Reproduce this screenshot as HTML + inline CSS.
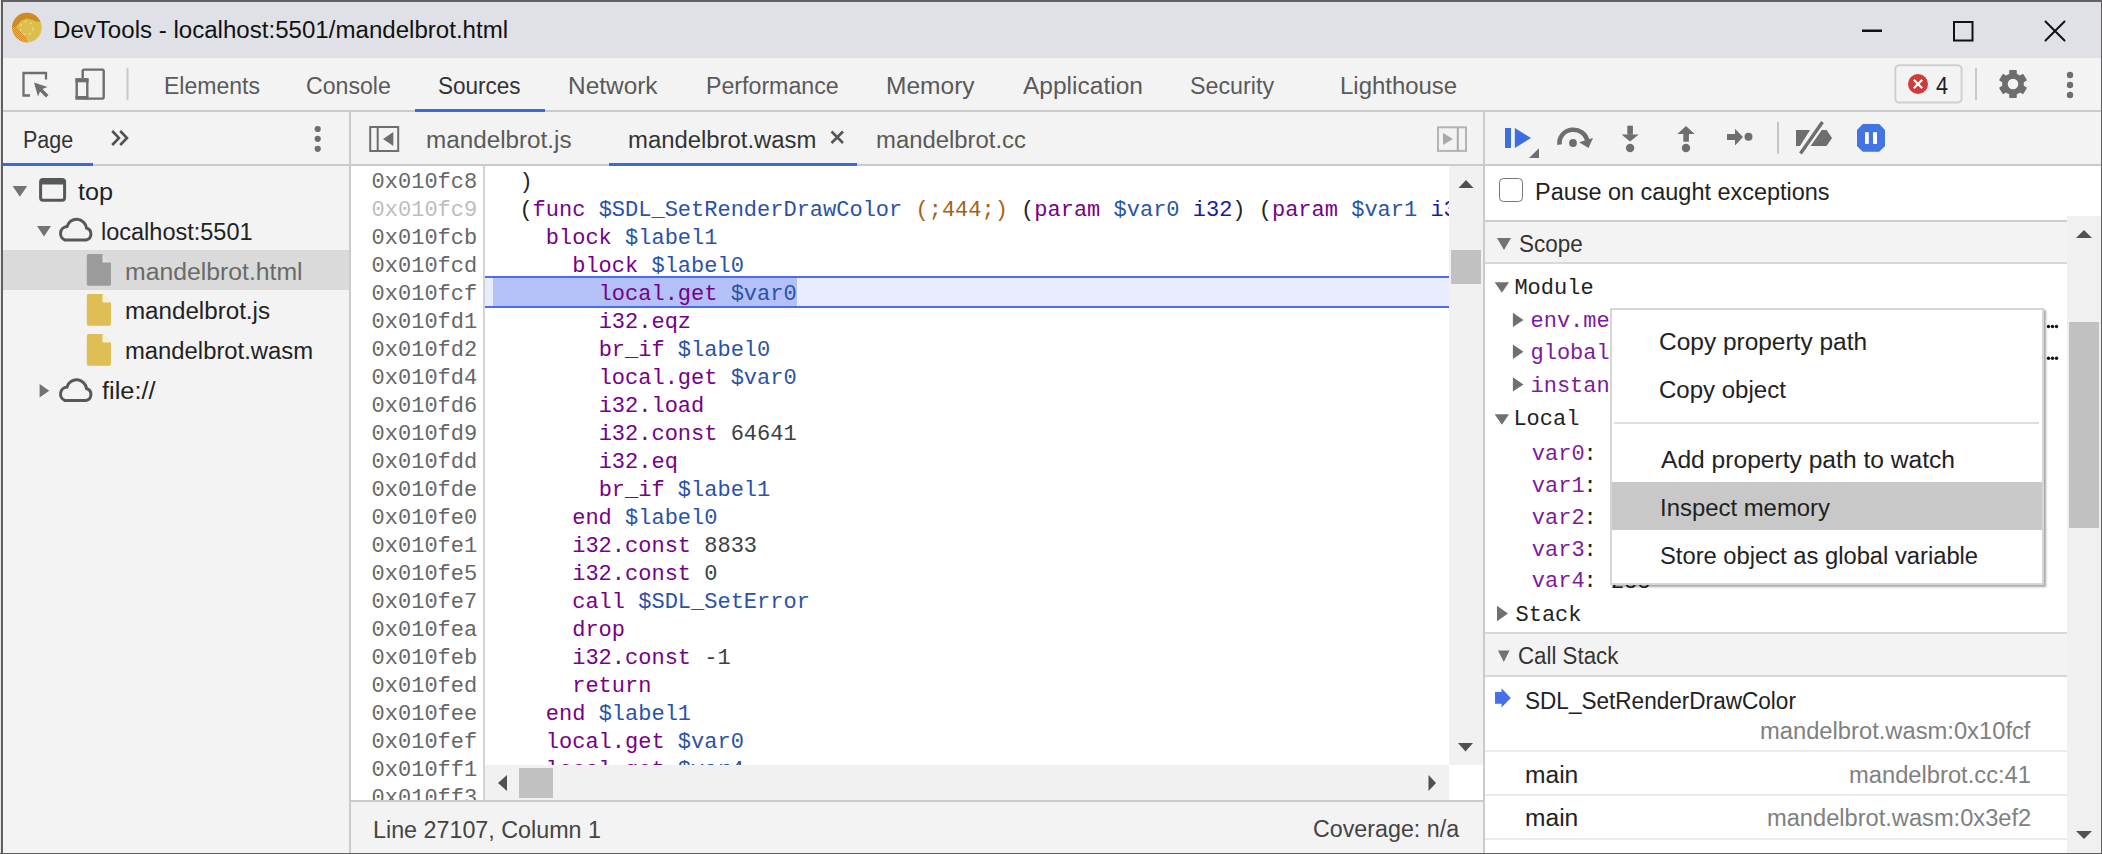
<!DOCTYPE html>
<html><head><meta charset="utf-8">
<style>
html,body{margin:0;padding:0;}
body{width:2102px;height:854px;position:relative;overflow:hidden;background:#5c5c5c;font-family:"Liberation Sans",sans-serif;}
.r{position:absolute;}
.t{position:absolute;white-space:pre;transform-origin:0 0;}
.c{position:absolute;left:493px;white-space:pre;font-family:"Liberation Mono",monospace;font-size:22px;line-height:22px;}
.g{position:absolute;left:371.6px;white-space:pre;font-family:"Liberation Mono",monospace;font-size:22px;line-height:22px;}
svg{position:absolute;overflow:visible;}
</style></head><body>
<!-- title bar -->
<div class="r" style="left:2px;top:2px;width:2099px;height:56px;background:#dfe1e6"></div>
<!-- main toolbar -->
<div class="r" style="left:2px;top:58px;width:2099px;height:52px;background:#f3f3f3"></div>
<div class="r" style="left:2px;top:110px;width:2099px;height:2px;background:#cbcbcb"></div>
<div class="r" style="left:415px;top:109px;width:130px;height:3px;background:#3a6ae0"></div>
<!-- navigator -->
<div class="r" style="left:2px;top:112px;width:347px;height:741px;background:#f3f3f3"></div>
<div class="r" style="left:2px;top:164px;width:347px;height:2px;background:#cbcbcb"></div>
<div class="r" style="left:2px;top:163px;width:91px;height:3px;background:#3a6ae0"></div>
<div class="r" style="left:2px;top:250px;width:347px;height:40px;background:#dadada"></div>
<div class="r" style="left:349px;top:112px;width:2px;height:741px;background:#cbcbcb"></div>
<!-- editor -->
<div class="r" style="left:351px;top:112px;width:1132px;height:52px;background:#f3f3f3"></div>
<div class="r" style="left:351px;top:164px;width:1132px;height:2px;background:#cbcbcb"></div>
<div class="r" style="left:609px;top:163px;width:248px;height:3px;background:#3a6ae0"></div>
<div class="r" style="left:351px;top:166px;width:1132px;height:634px;background:#fff"></div>
<div class="r" style="left:483px;top:166px;width:2px;height:634px;background:#d3d3d3"></div>
<!-- highlighted line -->
<div class="r" style="left:485px;top:276px;width:964px;height:32px;background:#4a6cf0"></div>
<div class="r" style="left:485px;top:278px;width:964px;height:28px;background:#e9ecfd"></div>
<div class="r" style="left:493px;top:278px;width:304px;height:28px;background:#b3c1f8"></div>
<div class="g" style="top:171.95px;color:#666666">0x010fc8</div>
<div class="g" style="top:199.95px;color:#bdbdbd">0x010fc9</div>
<div class="g" style="top:227.95px;color:#666666">0x010fcb</div>
<div class="g" style="top:255.95px;color:#666666">0x010fcd</div>
<div class="g" style="top:283.95px;color:#666666">0x010fcf</div>
<div class="g" style="top:311.95px;color:#666666">0x010fd1</div>
<div class="g" style="top:339.95px;color:#666666">0x010fd2</div>
<div class="g" style="top:367.95px;color:#666666">0x010fd4</div>
<div class="g" style="top:395.95px;color:#666666">0x010fd6</div>
<div class="g" style="top:423.95px;color:#666666">0x010fd9</div>
<div class="g" style="top:451.95px;color:#666666">0x010fdd</div>
<div class="g" style="top:479.95px;color:#666666">0x010fde</div>
<div class="g" style="top:507.95px;color:#666666">0x010fe0</div>
<div class="g" style="top:535.95px;color:#666666">0x010fe1</div>
<div class="g" style="top:563.95px;color:#666666">0x010fe5</div>
<div class="g" style="top:591.95px;color:#666666">0x010fe7</div>
<div class="g" style="top:619.95px;color:#666666">0x010fea</div>
<div class="g" style="top:647.95px;color:#666666">0x010feb</div>
<div class="g" style="top:675.95px;color:#666666">0x010fed</div>
<div class="g" style="top:703.95px;color:#666666">0x010fee</div>
<div class="g" style="top:731.95px;color:#666666">0x010fef</div>
<div class="g" style="top:759.95px;color:#666666">0x010ff1</div>
<div class="g" style="top:787.95px;color:#666666">0x010ff3</div>
<div class="c" style="top:171.95px"><span style="color:#222">  )</span></div>
<div class="c" style="top:199.95px"><span style="color:#222">  (</span><span style="color:#770088">func</span><span style="color:#222"> </span><span style="color:#2a52a8">$SDL_SetRenderDrawColor</span><span style="color:#222"> </span><span style="color:#a85f12">(;444;)</span><span style="color:#222"> (</span><span style="color:#770088">param</span><span style="color:#222"> </span><span style="color:#2a52a8">$var0</span><span style="color:#222"> </span><span style="color:#1a1a9c">i32</span><span style="color:#222">) (</span><span style="color:#770088">param</span><span style="color:#222"> </span><span style="color:#2a52a8">$var1</span><span style="color:#222"> </span><span style="color:#1a1a9c">i32</span><span style="color:#222">) (</span><span style="color:#770088">param</span></div>
<div class="c" style="top:227.95px"><span style="color:#222">    </span><span style="color:#770088">block</span><span style="color:#222"> </span><span style="color:#2a52a8">$label1</span></div>
<div class="c" style="top:255.95px"><span style="color:#222">      </span><span style="color:#770088">block</span><span style="color:#222"> </span><span style="color:#2a52a8">$label0</span></div>
<div class="c" style="top:283.95px"><span style="color:#222">        </span><span style="color:#770088">local.get</span><span style="color:#222"> </span><span style="color:#2a52a8">$var0</span></div>
<div class="c" style="top:311.95px"><span style="color:#222">        </span><span style="color:#770088">i32.eqz</span></div>
<div class="c" style="top:339.95px"><span style="color:#222">        </span><span style="color:#770088">br_if</span><span style="color:#222"> </span><span style="color:#2a52a8">$label0</span></div>
<div class="c" style="top:367.95px"><span style="color:#222">        </span><span style="color:#770088">local.get</span><span style="color:#222"> </span><span style="color:#2a52a8">$var0</span></div>
<div class="c" style="top:395.95px"><span style="color:#222">        </span><span style="color:#770088">i32.load</span></div>
<div class="c" style="top:423.95px"><span style="color:#222">        </span><span style="color:#770088">i32.const</span><span style="color:#222"> </span><span style="color:#3a423f">64641</span></div>
<div class="c" style="top:451.95px"><span style="color:#222">        </span><span style="color:#770088">i32.eq</span></div>
<div class="c" style="top:479.95px"><span style="color:#222">        </span><span style="color:#770088">br_if</span><span style="color:#222"> </span><span style="color:#2a52a8">$label1</span></div>
<div class="c" style="top:507.95px"><span style="color:#222">      </span><span style="color:#770088">end</span><span style="color:#222"> </span><span style="color:#2a52a8">$label0</span></div>
<div class="c" style="top:535.95px"><span style="color:#222">      </span><span style="color:#770088">i32.const</span><span style="color:#222"> </span><span style="color:#3a423f">8833</span></div>
<div class="c" style="top:563.95px"><span style="color:#222">      </span><span style="color:#770088">i32.const</span><span style="color:#222"> </span><span style="color:#3a423f">0</span></div>
<div class="c" style="top:591.95px"><span style="color:#222">      </span><span style="color:#770088">call</span><span style="color:#222"> </span><span style="color:#2a52a8">$SDL_SetError</span></div>
<div class="c" style="top:619.95px"><span style="color:#222">      </span><span style="color:#770088">drop</span></div>
<div class="c" style="top:647.95px"><span style="color:#222">      </span><span style="color:#770088">i32.const</span><span style="color:#222"> </span><span style="color:#3a423f">-1</span></div>
<div class="c" style="top:675.95px"><span style="color:#222">      </span><span style="color:#770088">return</span></div>
<div class="c" style="top:703.95px"><span style="color:#222">    </span><span style="color:#770088">end</span><span style="color:#222"> </span><span style="color:#2a52a8">$label1</span></div>
<div class="c" style="top:731.95px"><span style="color:#222">    </span><span style="color:#770088">local.get</span><span style="color:#222"> </span><span style="color:#2a52a8">$var0</span></div>
<div class="c" style="top:759.95px"><span style="color:#222">    </span><span style="color:#770088">local.get</span><span style="color:#222"> </span><span style="color:#2a52a8">$var4</span></div>
<!-- editor scrollbars -->
<div class="r" style="left:1449px;top:166px;width:34px;height:599px;background:#f1f1f1"></div>
<div class="r" style="left:1451px;top:250px;width:30px;height:34px;background:#c1c1c1"></div>
<div class="r" style="left:485px;top:765px;width:964px;height:35px;background:#f1f1f1"></div>
<div class="r" style="left:519px;top:768px;width:34px;height:30px;background:#c1c1c1"></div>
<div class="r" style="left:1449px;top:765px;width:34px;height:35px;background:#fff"></div>
<svg style="left:0;top:0" width="2102" height="854">
  <polygon points="1458.5,188 1473.5,188 1466,180" fill="#4c524c"/>
  <polygon points="1458,743 1473,743 1465.5,751.5" fill="#4c524c"/>
  <polygon points="507,775 507,791 498,783" fill="#4c524c"/>
  <polygon points="1428.5,775 1428.5,791 1436,783" fill="#4c524c"/>
</svg>
<!-- status bar -->
<div class="r" style="left:351px;top:800px;width:1132px;height:2px;background:#cbcbcb"></div>
<div class="r" style="left:351px;top:802px;width:1132px;height:51px;background:#f3f3f3"></div>
<div class="r" style="left:1483px;top:112px;width:2px;height:741px;background:#cbcbcb"></div>
<!-- sidebar -->
<div class="r" style="left:1485px;top:112px;width:616px;height:52px;background:#f3f3f3"></div>
<div class="r" style="left:1485px;top:164px;width:616px;height:2px;background:#cbcbcb"></div>
<div class="r" style="left:1485px;top:166px;width:616px;height:687px;background:#fff"></div>
<div class="r" style="left:1485px;top:220px;width:582px;height:2px;background:#cdcdcd"></div>
<div class="r" style="left:1485px;top:222px;width:582px;height:40px;background:#f3f3f3"></div>
<div class="r" style="left:1485px;top:262px;width:582px;height:2px;background:#d8d8d8"></div>
<div class="r" style="left:1485px;top:632px;width:582px;height:2px;background:#d8d8d8"></div>
<div class="r" style="left:1485px;top:634px;width:582px;height:41px;background:#f3f3f3"></div>
<div class="r" style="left:1485px;top:675px;width:582px;height:2px;background:#d8d8d8"></div>
<div class="r" style="left:1485px;top:750px;width:582px;height:2px;background:#ebebeb"></div>
<div class="r" style="left:1485px;top:794px;width:582px;height:2px;background:#ebebeb"></div>
<div class="r" style="left:1485px;top:838px;width:582px;height:2px;background:#ebebeb"></div>
<div class="r" style="left:2067px;top:216px;width:34px;height:637px;background:#f0f0f0"></div>
<div class="r" style="left:2069px;top:322px;width:30px;height:206px;background:#c1c1c1"></div>
<svg style="left:0;top:0" width="2102" height="854">
  <polygon points="2076,238 2092,238 2084,230" fill="#4c524c"/>
  <polygon points="2076,831 2092,831 2084,839" fill="#4c524c"/>
</svg>
<!-- checkbox -->
<div class="r" style="left:1499px;top:178px;width:22px;height:22px;border:1.6px solid #767676;border-radius:4.5px;background:#fff"></div>
<div class="t" style="left:53.38px;top:18.80px;font-family:&quot;Liberation Sans&quot;, sans-serif;font-size:23.5px;line-height:23.5px;color:#111;transform:scaleX(1.0247);">DevTools - localhost:5501/mandelbrot.html</div>
<div class="t" style="left:164.22px;top:75.30px;font-family:&quot;Liberation Sans&quot;, sans-serif;font-size:23.5px;line-height:23.5px;color:#5a5a5a;transform:scaleX(0.9791);">Elements</div>
<div class="t" style="left:306.02px;top:75.30px;font-family:&quot;Liberation Sans&quot;, sans-serif;font-size:23.5px;line-height:23.5px;color:#5a5a5a;transform:scaleX(0.9830);">Console</div>
<div class="t" style="left:438.24px;top:75.30px;font-family:&quot;Liberation Sans&quot;, sans-serif;font-size:23.5px;line-height:23.5px;color:#333;transform:scaleX(0.9579);">Sources</div>
<div class="t" style="left:568.26px;top:75.30px;font-family:&quot;Liberation Sans&quot;, sans-serif;font-size:23.5px;line-height:23.5px;color:#5a5a5a;transform:scaleX(1.0394);">Network</div>
<div class="t" style="left:706.41px;top:75.30px;font-family:&quot;Liberation Sans&quot;, sans-serif;font-size:23.5px;line-height:23.5px;color:#5a5a5a;transform:scaleX(0.9861);">Performance</div>
<div class="t" style="left:886.16px;top:75.30px;font-family:&quot;Liberation Sans&quot;, sans-serif;font-size:23.5px;line-height:23.5px;color:#5a5a5a;transform:scaleX(1.0438);">Memory</div>
<div class="t" style="left:1022.80px;top:75.30px;font-family:&quot;Liberation Sans&quot;, sans-serif;font-size:23.5px;line-height:23.5px;color:#5a5a5a;transform:scaleX(1.0431);">Application</div>
<div class="t" style="left:1189.71px;top:75.30px;font-family:&quot;Liberation Sans&quot;, sans-serif;font-size:23.5px;line-height:23.5px;color:#5a5a5a;transform:scaleX(0.9900);">Security</div>
<div class="t" style="left:1339.68px;top:75.30px;font-family:&quot;Liberation Sans&quot;, sans-serif;font-size:23.5px;line-height:23.5px;color:#5a5a5a;transform:scaleX(1.0183);">Lighthouse</div>
<div class="t" style="left:1936.00px;top:75.00px;font-family:&quot;Liberation Sans&quot;, sans-serif;font-size:23.5px;line-height:23.5px;color:#222;transform:scaleX(0.9231);">4</div>
<div class="t" style="left:22.68px;top:129.10px;font-family:&quot;Liberation Sans&quot;, sans-serif;font-size:23.5px;line-height:23.5px;color:#333;transform:scaleX(0.9161);">Page</div>
<div class="t" style="left:425.67px;top:129.20px;font-family:&quot;Liberation Sans&quot;, sans-serif;font-size:23.5px;line-height:23.5px;color:#5a5a5a;transform:scaleX(1.0322);">mandelbrot.js</div>
<div class="t" style="left:628.18px;top:129.20px;font-family:&quot;Liberation Sans&quot;, sans-serif;font-size:23.5px;line-height:23.5px;color:#333;transform:scaleX(1.0158);">mandelbrot.wasm</div>
<div class="t" style="left:876.18px;top:129.20px;font-family:&quot;Liberation Sans&quot;, sans-serif;font-size:23.5px;line-height:23.5px;color:#5a5a5a;transform:scaleX(1.0160);">mandelbrot.cc</div>
<div class="t" style="left:77.50px;top:180.80px;font-family:&quot;Liberation Sans&quot;, sans-serif;font-size:23.5px;line-height:23.5px;color:#222;transform:scaleX(1.0737);">top</div>
<div class="t" style="left:101.00px;top:220.80px;font-family:&quot;Liberation Sans&quot;, sans-serif;font-size:23.5px;line-height:23.5px;color:#222;">localhost:5501</div>
<div class="t" style="left:125.35px;top:260.50px;font-family:&quot;Liberation Sans&quot;, sans-serif;font-size:23.5px;line-height:23.5px;color:#6a6a6a;transform:scaleX(1.0537);">mandelbrot.html</div>
<div class="t" style="left:125.37px;top:300.30px;font-family:&quot;Liberation Sans&quot;, sans-serif;font-size:23.5px;line-height:23.5px;color:#222;transform:scaleX(1.0279);">mandelbrot.js</div>
<div class="t" style="left:125.39px;top:340.30px;font-family:&quot;Liberation Sans&quot;, sans-serif;font-size:23.5px;line-height:23.5px;color:#222;transform:scaleX(1.0137);">mandelbrot.wasm</div>
<div class="t" style="left:102.00px;top:380.40px;font-family:&quot;Liberation Sans&quot;, sans-serif;font-size:23.5px;line-height:23.5px;color:#222;transform:scaleX(1.0779);">file://</div>
<div class="t" style="left:1534.70px;top:181.10px;font-family:&quot;Liberation Sans&quot;, sans-serif;font-size:23.5px;line-height:23.5px;color:#222;transform:scaleX(0.9976);">Pause on caught exceptions</div>
<div class="t" style="left:1519.05px;top:232.90px;font-family:&quot;Liberation Sans&quot;, sans-serif;font-size:23.5px;line-height:23.5px;color:#333;transform:scaleX(0.9548);">Scope</div>
<div class="t" style="left:1514.40px;top:277.95px;font-family:&quot;Liberation Mono&quot;, monospace;font-size:22px;line-height:22px;color:#222;">Module</div>
<div class="t" style="left:1530.50px;top:311.35px;font-family:&quot;Liberation Mono&quot;, monospace;font-size:22px;line-height:22px;color:#7d1a9c;">env.me</div>
<div class="t" style="left:1530.50px;top:343.45px;font-family:&quot;Liberation Mono&quot;, monospace;font-size:22px;line-height:22px;color:#7d1a9c;">global</div>
<div class="t" style="left:1530.50px;top:376.25px;font-family:&quot;Liberation Mono&quot;, monospace;font-size:22px;line-height:22px;color:#7d1a9c;">instan</div>
<div class="t" style="left:1513.40px;top:409.15px;font-family:&quot;Liberation Mono&quot;, monospace;font-size:22px;line-height:22px;color:#222;">Local</div>
<div class="t" style="left:1531.80px;top:444.15px;font-family:&quot;Liberation Mono&quot;, monospace;font-size:22px;line-height:22px;color:#7d1a9c;">var0</div>
<div class="t" style="left:1583.50px;top:444.15px;font-family:&quot;Liberation Mono&quot;, monospace;font-size:22px;line-height:22px;color:#222;">:</div>
<div class="t" style="left:1531.80px;top:476.05px;font-family:&quot;Liberation Mono&quot;, monospace;font-size:22px;line-height:22px;color:#7d1a9c;">var1</div>
<div class="t" style="left:1583.50px;top:476.05px;font-family:&quot;Liberation Mono&quot;, monospace;font-size:22px;line-height:22px;color:#222;">:</div>
<div class="t" style="left:1531.80px;top:508.25px;font-family:&quot;Liberation Mono&quot;, monospace;font-size:22px;line-height:22px;color:#7d1a9c;">var2</div>
<div class="t" style="left:1583.50px;top:508.25px;font-family:&quot;Liberation Mono&quot;, monospace;font-size:22px;line-height:22px;color:#222;">:</div>
<div class="t" style="left:1531.80px;top:539.65px;font-family:&quot;Liberation Mono&quot;, monospace;font-size:22px;line-height:22px;color:#7d1a9c;">var3</div>
<div class="t" style="left:1583.50px;top:539.65px;font-family:&quot;Liberation Mono&quot;, monospace;font-size:22px;line-height:22px;color:#222;">:</div>
<div class="t" style="left:1531.80px;top:571.35px;font-family:&quot;Liberation Mono&quot;, monospace;font-size:22px;line-height:22px;color:#7d1a9c;">var4</div>
<div class="t" style="left:1583.50px;top:571.35px;font-family:&quot;Liberation Mono&quot;, monospace;font-size:22px;line-height:22px;color:#222;">:</div>
<div class="t" style="left:1611.00px;top:572.35px;font-family:&quot;Liberation Mono&quot;, monospace;font-size:22px;line-height:22px;color:#222;">255</div>
<div class="t" style="left:1515.50px;top:605.35px;font-family:&quot;Liberation Mono&quot;, monospace;font-size:22px;line-height:22px;color:#222;">Stack</div>
<div class="t" style="left:1518.35px;top:645.10px;font-family:&quot;Liberation Sans&quot;, sans-serif;font-size:23.5px;line-height:23.5px;color:#333;transform:scaleX(0.9492);">Call Stack</div>
<div class="t" style="left:1524.94px;top:690.40px;font-family:&quot;Liberation Sans&quot;, sans-serif;font-size:23.5px;line-height:23.5px;color:#222;transform:scaleX(0.9602);">SDL_SetRenderDrawColor</div>
<div class="t" style="left:1759.99px;top:720.00px;font-family:&quot;Liberation Sans&quot;, sans-serif;font-size:23.5px;line-height:23.5px;color:#808080;transform:scaleX(1.0100);">mandelbrot.wasm:0x10fcf</div>
<div class="t" style="left:1524.85px;top:763.50px;font-family:&quot;Liberation Sans&quot;, sans-serif;font-size:23.5px;line-height:23.5px;color:#222;transform:scaleX(1.0457);">main</div>
<div class="t" style="left:1848.79px;top:763.50px;font-family:&quot;Liberation Sans&quot;, sans-serif;font-size:23.5px;line-height:23.5px;color:#808080;transform:scaleX(1.0096);">mandelbrot.cc:41</div>
<div class="t" style="left:1524.85px;top:807.00px;font-family:&quot;Liberation Sans&quot;, sans-serif;font-size:23.5px;line-height:23.5px;color:#222;transform:scaleX(1.0457);">main</div>
<div class="t" style="left:1766.59px;top:807.00px;font-family:&quot;Liberation Sans&quot;, sans-serif;font-size:23.5px;line-height:23.5px;color:#808080;transform:scaleX(1.0062);">mandelbrot.wasm:0x3ef2</div>
<div class="t" style="left:373.01px;top:818.60px;font-family:&quot;Liberation Sans&quot;, sans-serif;font-size:23.5px;line-height:23.5px;color:#444;transform:scaleX(0.9914);">Line 27107, Column 1</div>
<div class="t" style="left:1313.41px;top:818.40px;font-family:&quot;Liberation Sans&quot;, sans-serif;font-size:23.5px;line-height:23.5px;color:#444;transform:scaleX(0.9895);">Coverage: n/a</div>
<!-- ICONS -->
<svg style="left:0;top:0" width="2102" height="854">
  <defs>
    <radialGradient id="gold" cx="0.45" cy="0.55" r="0.6">
      <stop offset="0" stop-color="#ecd070"/>
      <stop offset="0.6" stop-color="#dcb43a"/>
      <stop offset="1" stop-color="#c89020"/>
    </radialGradient>
  <clipPath id="coin"><circle cx="26.9" cy="27.6" r="14.8"/></clipPath>
    <pattern id="dith" width="2" height="2" patternUnits="userSpaceOnUse"><rect width="1" height="1" fill="#cf8a22"/><rect x="1" y="1" width="1" height="1" fill="#cf8a22"/></pattern>
  </defs>
  <!-- app icon -->
  <circle cx="26.9" cy="27.6" r="14.8" fill="#dcbe4c"/>
  <g clip-path="url(#coin)">
    <polygon points="10,10 44,10 44,21.5 36,21.5 33,20 26.5,18.5 21,21 16,26.5 12,28" fill="#cf8a22"/>
    <polygon points="12,28 16,26.5 19,29 22,34 26,36 28,44 10,44" fill="url(#dith)"/>
  </g>
  <circle cx="26.6" cy="28.2" r="6.5" fill="none" stroke="#f3dc9a" stroke-width="1.1" stroke-dasharray="2.5 3"/>
  <!-- window controls -->
  <rect x="1862" y="29.5" width="20" height="2.5" fill="#111"/>
  <rect x="1954" y="22" width="18.5" height="18.5" fill="none" stroke="#111" stroke-width="2"/>
  <path d="M2045.5,21.5 L2064.5,40.5 M2064.5,21.5 L2045.5,40.5" stroke="#111" stroke-width="2" stroke-linecap="round"/>
  <!-- inspect icon -->
  <path d="M30,95.5 H23.5 V73 H46 V79.5" fill="none" stroke="#6e6e6e" stroke-width="2.3"/>
  <polygon points="34,82.5 47.5,87 42.5,89 48.5,95 46,97.5 40,91.5 38,96.5" fill="#6e6e6e"/>
  <!-- device icon -->
  <rect x="82.7" y="69.6" width="21" height="29" rx="1.5" fill="none" stroke="#6e6e6e" stroke-width="2.4"/>
  <rect x="75.5" y="78.3" width="13" height="21.2" rx="1.2" fill="#f3f3f3"/>
  <rect x="76.7" y="79.5" width="10.6" height="18.8" fill="none" stroke="#6e6e6e" stroke-width="2.4"/>
  <rect x="75.5" y="78.3" width="13" height="4" fill="#6e6e6e"/>
  <rect x="75.5" y="96" width="13" height="3.5" fill="#6e6e6e"/>
  <rect x="126.5" y="68" width="2" height="32" fill="#c8c8c8"/>
  <!-- error badge -->
  <rect x="1895.3" y="65.3" width="66.3" height="37.3" rx="4" fill="none" stroke="#cfcfcf" stroke-width="2"/>
  <circle cx="1918" cy="84" r="10" fill="#cf3a3a"/>
  <path d="M1913.8,79.8 L1922.2,88.2 M1922.2,79.8 L1913.8,88.2" stroke="#fff" stroke-width="2.2"/>
  <rect x="1975" y="68" width="2" height="32" fill="#c8c8c8"/>
  <!-- gear -->
  <g transform="translate(2013,84)" fill="#6e6e6e">
    <circle r="10.8"/>
    <rect x="-3.8" y="-14" width="7.6" height="28" rx="0.8"/>
    <rect x="-3.8" y="-14" width="7.6" height="28" rx="0.8" transform="rotate(60)"/>
    <rect x="-3.8" y="-14" width="7.6" height="28" rx="0.8" transform="rotate(120)"/>
    <circle r="5.3" fill="#f3f3f3"/>
  </g>
  <!-- kebab main -->
  <circle cx="2070" cy="75" r="3.2" fill="#6e6e6e"/>
  <circle cx="2070" cy="85" r="3.2" fill="#6e6e6e"/>
  <circle cx="2070" cy="95" r="3.2" fill="#6e6e6e"/>
  <!-- navigator header -->
  <path d="M112.2,131 L119,138 L112.2,145 M120.2,131 L127,138 L120.2,145" fill="none" stroke="#505050" stroke-width="2.6"/>
  <circle cx="317.7" cy="129" r="3.1" fill="#6e6e6e"/>
  <circle cx="317.7" cy="138.8" r="3.1" fill="#6e6e6e"/>
  <circle cx="317.7" cy="148.8" r="3.1" fill="#6e6e6e"/>
  <!-- editor nav toggle -->
  <rect x="370.2" y="127" width="28" height="24" fill="none" stroke="#6e6e6e" stroke-width="2"/>
  <rect x="376.7" y="127" width="2" height="24" fill="#6e6e6e"/>
  <polygon points="393.3,132 393.3,146 383,139" fill="#6e6e6e"/>
  <!-- close x on tab -->
  <path d="M831.5,131.5 L843,143 M843,131.5 L831.5,143" stroke="#555" stroke-width="2.6"/>
  <!-- sidebar toggle -->
  <rect x="1438" y="127.3" width="28" height="23.6" fill="none" stroke="#b4b4b4" stroke-width="2"/>
  <rect x="1456.8" y="127.3" width="2" height="23.6" fill="#aaa"/>
  <polygon points="1443,133 1443,145 1453,139" fill="#aaa"/>
  <!-- debugger toolbar -->
  <rect x="1505" y="128" width="6" height="20" fill="#3c6ee0"/>
  <polygon points="1514.8,128 1514.8,148 1531,138" fill="#3c6ee0"/>
  <polygon points="1529,158 1539,158 1539,148.3" fill="#6e6e6e"/>
  <!-- step over -->
  <path d="M1559.6,144.6 A13.8,13 0 0 1 1587.2,141" fill="none" stroke="#6e6e6e" stroke-width="4.6"/>
  <polygon points="1579.1,142.3 1593,138 1588.5,147.9" fill="#6e6e6e"/>
  <circle cx="1573" cy="143" r="3.9" fill="#6e6e6e"/>
  <!-- step into -->
  <rect x="1627.3" y="125.7" width="5.6" height="9" fill="#6e6e6e"/>
  <polygon points="1621.5,134.5 1638.7,134.5 1630.1,141.5" fill="#6e6e6e"/>
  <circle cx="1630.1" cy="148" r="4.2" fill="#6e6e6e"/>
  <!-- step out -->
  <polygon points="1677.4,134 1694.6,134 1686,126" fill="#6e6e6e"/>
  <rect x="1683.3" y="133.5" width="5.6" height="8.2" fill="#6e6e6e"/>
  <circle cx="1686" cy="148" r="4.2" fill="#6e6e6e"/>
  <!-- step -->
  <rect x="1727" y="134" width="9" height="6" fill="#6e6e6e"/>
  <polygon points="1735,128.7 1743,137 1735,145.5" fill="#6e6e6e"/>
  <circle cx="1748.5" cy="136.8" r="4" fill="#6e6e6e"/>
  <rect x="1777" y="122" width="2" height="31.6" fill="#c4c4c4"/>
  <!-- deactivate breakpoints -->
  <polygon points="1796,130 1810,130 1800,146 1796,146" fill="#6e6e6e"/>
  <polygon points="1818,130 1826.5,130 1832,138 1826.5,146 1807.5,146" fill="#6e6e6e"/>
  <path d="M1822.5,122 L1800.5,153.5" stroke="#f3f3f3" stroke-width="8"/>
  <path d="M1822.5,122 L1800.5,153.5" stroke="#6e6e6e" stroke-width="3.4"/>
  <!-- pause on exceptions -->
  <polygon points="1862.8,124 1879.2,124 1885,130 1885,146 1879.2,151.8 1862.8,151.8 1857,146 1857,130" fill="#4274e4"/>
  <rect x="1865" y="132.2" width="3.8" height="11.7" fill="#fff"/>
  <rect x="1873" y="132.2" width="4" height="11.7" fill="#fff"/>
  <!-- navigator tree -->
  <polygon points="12.6,186 27.2,186 19.9,196.7" fill="#737373"/>
  <rect x="40.6" y="179.5" width="24" height="20.8" rx="2.5" fill="none" stroke="#555a57" stroke-width="3"/>
  <rect x="40" y="179" width="25" height="5.5" fill="#555a57"/>
  <polygon points="37,226 51,226 44,236.5" fill="#737373"/>
  <path id="cloud1" d="M65,240 H86 A6.2,6.2 0 0 0 86.5,228 A10,10 0 0 0 67,226.5 A7,7 0 0 0 65,240 Z" fill="none" stroke="#555a57" stroke-width="3"/>
  <polygon points="39.6,384 39.6,397.6 49.3,390.8" fill="#737373"/>
  <path d="M65,400.5 H86 A6.2,6.2 0 0 0 86.5,388.5 A10,10 0 0 0 67,387 A7,7 0 0 0 65,400.5 Z" fill="none" stroke="#555a57" stroke-width="3"/>
  <!-- file icons -->
  <path d="M88.5,254 H102.5 L111,262.5 V284 Q111,285.7 109.3,285.7 H88.5 Q86.8,285.7 86.8,284 V255.7 Q86.8,254 88.5,254 Z" fill="#9b9b9b"/>
  <polygon points="102.5,254 111,262.5 102.5,262.5" fill="#e0e0e0"/>
  <path d="M88.5,294 H102.5 L111,302.5 V324 Q111,325.8 109.3,325.8 H88.5 Q86.8,325.8 86.8,324 V295.7 Q86.8,294 88.5,294 Z" fill="#dfbf55"/>
  <polygon points="102.5,294 111,302.5 102.5,302.5" fill="#f8f0d8"/>
  <path d="M88.5,334 H102.5 L111,342.5 V364 Q111,365.8 109.3,365.8 H88.5 Q86.8,365.8 86.8,364 V335.7 Q86.8,334 88.5,334 Z" fill="#dfbf55"/>
  <polygon points="102.5,334 111,342.5 102.5,342.5" fill="#f8f0d8"/>
  <!-- sidebar triangles -->
  <polygon points="1497,238 1511,238 1504,250" fill="#737373"/>
  <polygon points="1494.7,282.2 1509,282.2 1501.9,292.7" fill="#707070"/>
  <polygon points="1512.9,312.7 1512.9,327.1 1523.5,319.9" fill="#707070"/>
  <polygon points="1512.9,344.5 1512.9,358.9 1523.5,351.7" fill="#707070"/>
  <polygon points="1512.9,377.2 1512.9,391.6 1523.5,384.4" fill="#707070"/>
  <polygon points="1494.7,414.2 1509,414.2 1501.9,424.7" fill="#707070"/>
  <polygon points="1497,605.8 1497,621.2 1508,613.5" fill="#707070"/>
  <polygon points="1498,650.5 1509.6,650.5 1503.8,662" fill="#737373"/>
  <!-- call stack arrow -->
  <polygon points="1495,692 1501.5,692 1501.5,688.2 1510.8,698 1501.5,707.6 1501.5,703.8 1495,703.8" fill="#4570ea"/>
  <!-- ellipsis -->
  <circle cx="2048.5" cy="326.5" r="1.7" fill="#111"/><circle cx="2052.5" cy="326.5" r="1.7" fill="#111"/><circle cx="2056.5" cy="326.5" r="1.7" fill="#111"/>
  <circle cx="2048.5" cy="358.3" r="1.7" fill="#111"/><circle cx="2052.5" cy="358.3" r="1.7" fill="#111"/><circle cx="2056.5" cy="358.3" r="1.7" fill="#111"/>
</svg>
<!-- context menu -->
<div class="r" style="left:1610px;top:307.8px;width:430px;height:273.5px;border:2px solid #d6d6d6;background:#fff;box-shadow:2px 2px 2px rgba(0,0,0,0.35)"></div>
<div class="r" style="left:1613.8px;top:422px;width:425px;height:2px;background:#dedede"></div>
<div class="r" style="left:1612px;top:482px;width:430px;height:48px;background:#c8c8c8"></div>
<div class="t" style="left:1659.26px;top:331.30px;font-family:&quot;Liberation Sans&quot;, sans-serif;font-size:23.5px;line-height:23.5px;color:#222;transform:scaleX(1.0410);">Copy property path</div>
<div class="t" style="left:1659.28px;top:378.50px;font-family:&quot;Liberation Sans&quot;, sans-serif;font-size:23.5px;line-height:23.5px;color:#222;transform:scaleX(1.0221);">Copy object</div>
<div class="t" style="left:1660.50px;top:449.20px;font-family:&quot;Liberation Sans&quot;, sans-serif;font-size:23.5px;line-height:23.5px;color:#222;transform:scaleX(1.0468);">Add property path to watch</div>
<div class="t" style="left:1659.77px;top:497.10px;font-family:&quot;Liberation Sans&quot;, sans-serif;font-size:23.5px;line-height:23.5px;color:#222;transform:scaleX(1.0169);">Inspect memory</div>
<div class="t" style="left:1659.89px;top:545.30px;font-family:&quot;Liberation Sans&quot;, sans-serif;font-size:23.5px;line-height:23.5px;color:#222;transform:scaleX(1.0103);">Store object as global variable</div>
<!-- window border -->
<div class="r" style="left:0;top:0;width:2102px;height:2px;background:#626262"></div>
<div class="r" style="left:0;top:0;width:1px;height:854px;background:#e6e6e6"></div>
<div class="r" style="left:1px;top:0;width:2px;height:854px;background:#5f5f5f"></div>
<div class="r" style="left:2101px;top:0;width:1px;height:854px;background:#5f5f5f"></div>
<div class="r" style="left:0;top:853px;width:2102px;height:1px;background:#5f5f5f"></div>
</body></html>
